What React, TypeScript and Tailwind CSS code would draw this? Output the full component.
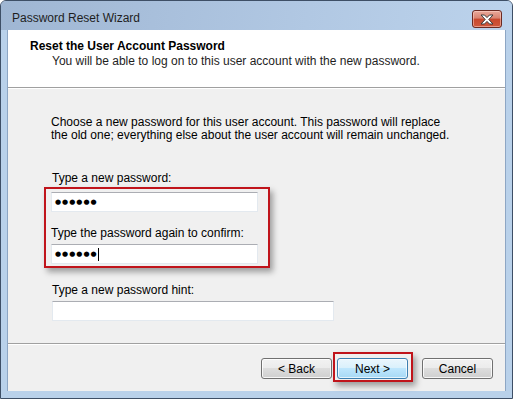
import React from "react";

const font = { fontFamily: '"Liberation Sans", Arial, sans-serif' };

const WinButton = ({ label, focused = false }: { label: string; focused?: boolean }) => (
  <div
    className={
      focused
        ? "relative w-[71px] h-[21px] rounded-[3px] border border-[#3c7fb1] bg-[linear-gradient(#eaf6fd_0%,#d9f0fc_49%,#bee6fd_50%,#a7d9f5_100%)] shadow-[inset_0_0_0_1px_rgba(255,255,255,0.7)] flex items-center justify-center text-[12px] text-black"
        : "relative w-[71px] h-[21px] rounded-[3px] border border-[#707070] bg-[linear-gradient(#f2f2f2_0%,#ebebeb_49%,#dddddd_50%,#cfcfcf_100%)] shadow-[inset_0_0_0_1px_rgba(255,255,255,0.8)] flex items-center justify-center text-[12px] text-black"
    }
  >
    {label}
  </div>
);

const TextBox = ({ width, value, caret = false }: { width: number; value?: string; caret?: boolean }) => (
  <div
    className="h-[20px] bg-white border border-[#e3e9ef] border-t-[#abadb3] flex items-center pl-[3px]"
    style={{ width }}
  >
    {value && (
      <span className="text-[7px] tracking-[1px] text-black leading-none" style={{ fontFamily: '"DejaVu Sans", sans-serif' }}>
        {value}
      </span>
    )}
    {caret && <span className="w-px h-[13px] bg-black" />}
  </div>
);

export default function App() {
  return (
    <div className="w-[513px] h-[399px] overflow-hidden bg-white" style={font}>
      <div className="w-[513px] h-[399px] flex flex-col rounded-t-[6px] border border-[#3e4f66] bg-[#b9d1ea]">
        {/* Title bar */}
        <div className="h-[29px] flex justify-between rounded-t-[5px] bg-[linear-gradient(100deg,#9fb6d3_0%,#b1c8e3_60%,#bcd3ec_100%)]">
          <div className="pl-[11px] pt-[9px] text-[12px] text-[#1e1e1e] leading-[16px]">Password Reset Wizard</div>
          <div className="mt-[9px] mr-[10px] w-[30px] h-[18px] rounded-[3px] border border-[#6b2a22] bg-[linear-gradient(#e9a99b_0%,#d98370_45%,#c8482d_50%,#d0583c_100%)] shadow-[inset_0_0_0_1px_rgba(255,220,210,0.5)] flex items-center justify-center">
            <svg width="14" height="11" viewBox="0 0 14 11">
              <path
                d="M1 1h3.5L7 3.6 9.5 1H13L8.8 5.5 13 10H9.5L7 7.4 4.5 10H1l4.2-4.5z"
                fill="#ffffff"
                stroke="#3b3b3b"
                strokeWidth="1"
                strokeLinejoin="round"
              />
            </svg>
          </div>
        </div>

        {/* Client area */}
        <div className="mx-[6px] h-[361px] border-l border-r border-[#8da6c4] bg-[#f0f0f0] flex flex-col">
          {/* Header */}
          <div className="h-[58px] bg-white pl-[22px] pt-[9px] border-b border-[#a0a0a0]">
            <div className="text-[12px] font-bold leading-[15px] text-black">Reset the User Account Password</div>
            <div className="pl-[22px] text-[12px] leading-[15px] text-[#1e1e1e]">
              You will be able to log on to this user account with the new password.
            </div>
          </div>
          <div className="h-px bg-white" />

          {/* Body */}
          <div className="pl-[43px] flex flex-col">
            <p className="mt-[27px] text-[12px] leading-[13px] text-black">
              Choose a new password for this user account. This password will replace
              <br />
              the old one; everything else about the user account will remain unchanged.
            </p>

            <div className="mt-[29px] ml-px text-[12px] leading-[15px] text-black">Type a new password:</div>

            <div className="mt-px -ml-[7px] w-[226px] h-[81px] border-2 border-[#c0141b] px-[5px] pt-[3px] shadow-[3px_4px_6px_rgba(0,0,0,0.35)] flex flex-col">
              <TextBox width={207} value="●●●●●●" />
              <div className="mt-[14px] text-[12px] leading-[15px] text-black">Type the password again to confirm:</div>
              <div className="mt-[3px]">
                <TextBox width={207} value="●●●●●●" caret />
              </div>
            </div>

            <div className="mt-[15px] ml-px text-[12px] leading-[15px] text-black">Type a new password hint:</div>
            <div className="mt-[3px] ml-px">
              <TextBox width={282} />
            </div>
          </div>

          {/* Footer */}
          <div className="mt-[22px] h-px bg-[#a0a0a0]" />
          <div className="h-px bg-white" />
          <div className="mt-[13px] flex justify-end pr-[12px]">
            <WinButton label="< Back" />
            <div className="relative ml-[5px]">
              <div className="absolute -left-[4px] -top-[6px] w-[80px] h-[30px] border-2 border-[#c0141b] shadow-[3px_4px_6px_rgba(0,0,0,0.35)]" />
              <WinButton label="Next >" focused />
            </div>
            <div className="ml-[14px]">
              <WinButton label="Cancel" />
            </div>
          </div>
        </div>
      </div>
    </div>
  );
}
